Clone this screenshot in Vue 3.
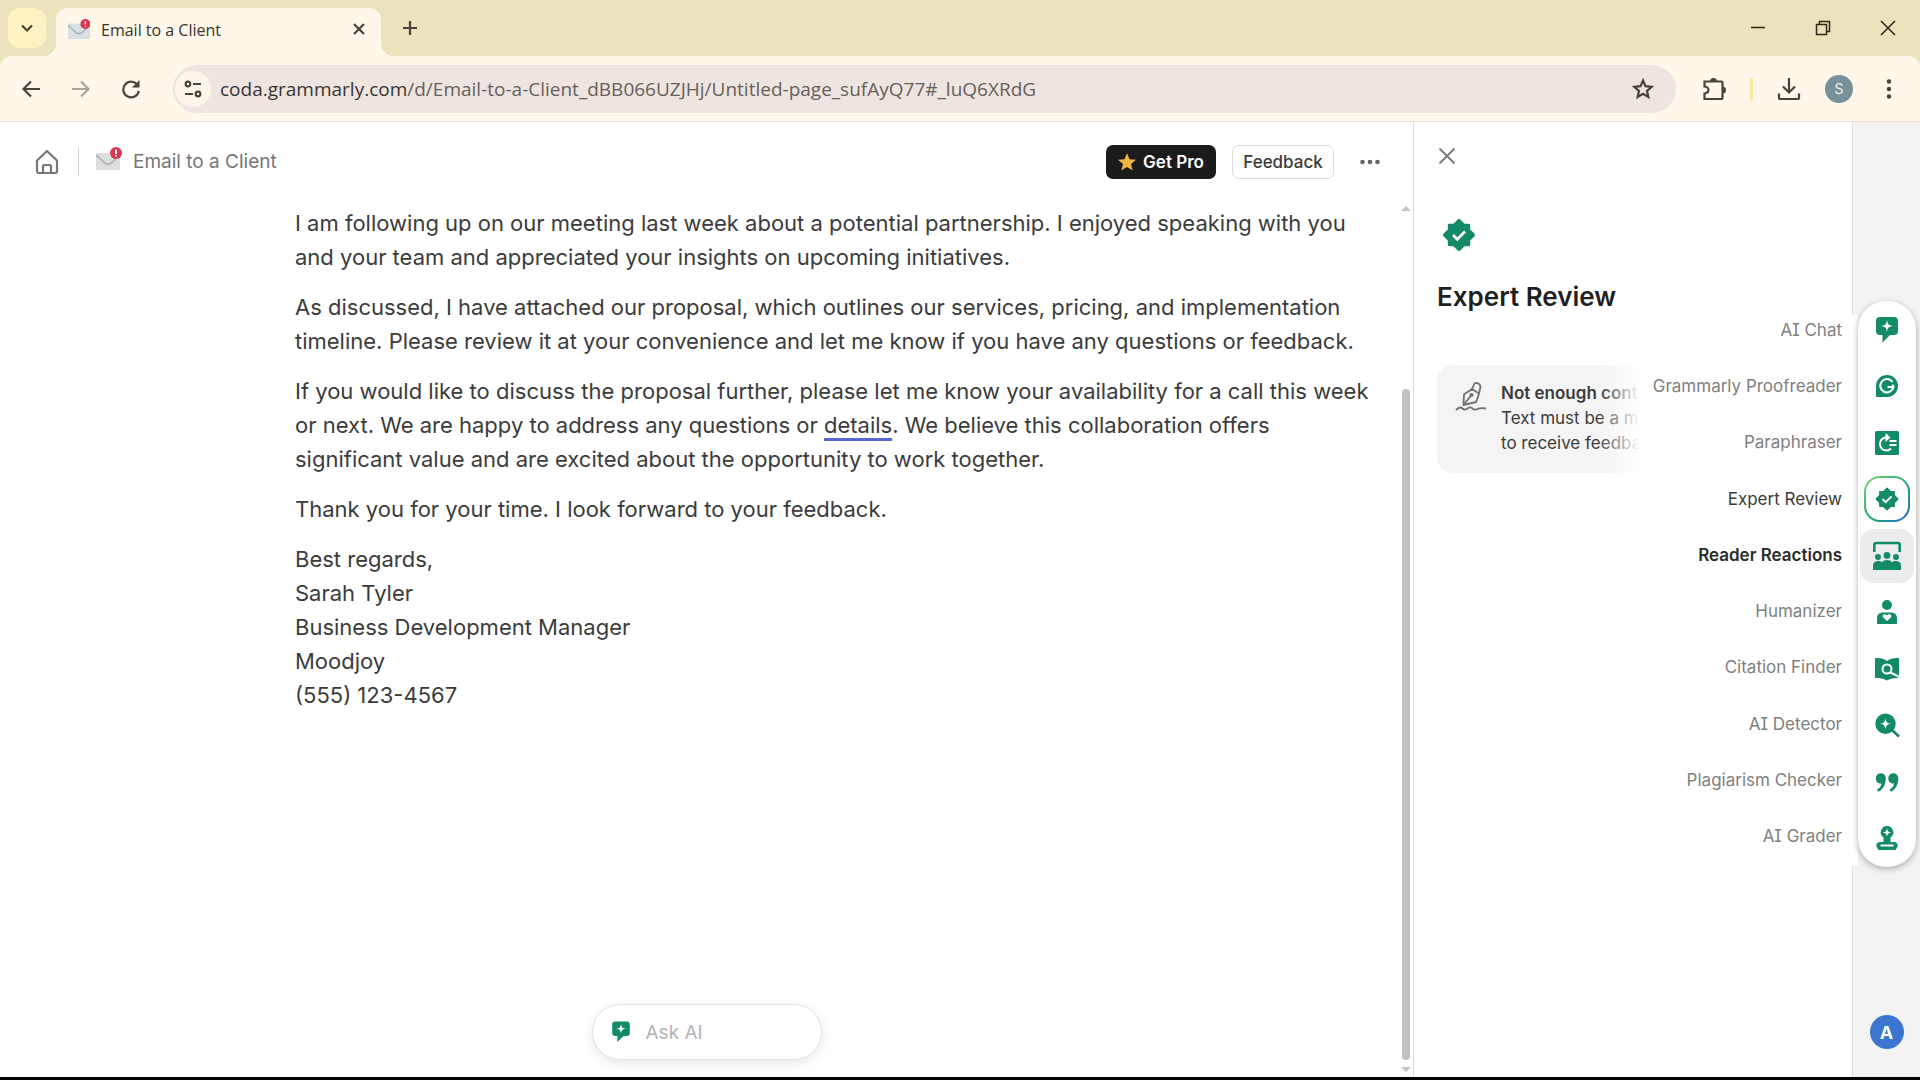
<template>
  <div class="window">
    <!-- Tab strip -->
    <header class="tab-strip">
      <button class="tab-search" aria-label="Search tabs">
        <svg width="14" height="14" viewBox="0 0 14 14"><path class="line" d="M2 4.5l5 5 5-5" /></svg>
      </button>
      <div class="tab">
        <svg class="mail" width="22" height="20" viewBox="0 0 24 22">
          <rect x="0" y="5" width="24" height="17" rx="1" fill="#d9dfe2" />
          <path d="M0 7l10 9h4l8-7" fill="none" stroke="#a3b2b8" stroke-width="1.5" />
          <circle cx="19" cy="5.5" r="5.5" fill="#d93850" />
          <path d="M19 2.5v3.5M19 7.5v1" stroke="#fff" stroke-width="1.5" />
        </svg>
        <span class="tab-title">Email to a Client</span>
        <button class="tab-close" aria-label="Close tab">
          <svg width="12" height="12" viewBox="0 0 12 12"><path class="line" d="M1 1l10 10M11 1L1 11" /></svg>
        </button>
      </div>
      <button class="new-tab" aria-label="New tab">
        <svg width="16" height="16" viewBox="0 0 16 16"><path class="line" d="M8 1v14M1 8h14" /></svg>
      </button>
      <div class="window-controls">
        <button aria-label="Minimize">
          <svg width="16" height="16" viewBox="0 0 16 16"><path class="thin" d="M1 7.5h14" /></svg>
        </button>
        <button aria-label="Restore">
          <svg width="16" height="16" viewBox="0 0 16 16"><path class="thin" d="M1.5 4.5h10v10h-10zM4.5 4V1.5h10v10H12" /></svg>
        </button>
        <button aria-label="Close">
          <svg width="16" height="16" viewBox="0 0 16 16"><path class="thin" d="M1 1l14 14M15 1L1 15" /></svg>
        </button>
      </div>
    </header>

    <!-- Toolbar -->
    <nav class="toolbar">
      <button class="tool-btn" aria-label="Back">
        <svg width="20" height="20" viewBox="0 0 20 20"><path class="line" d="M19 10H3M10 2.5L2.5 10l7.5 7.5" /></svg>
      </button>
      <button class="tool-btn disabled" aria-label="Forward" disabled>
        <svg width="20" height="20" viewBox="0 0 20 20"><path class="line" d="M1 10h16M10 2.5l7.5 7.5-7.5 7.5" /></svg>
      </button>
      <button class="tool-btn" aria-label="Reload">
        <svg width="20" height="20" viewBox="0 0 20 20">
          <path class="line" d="M16.5 6A7.8 7.8 0 1 0 17.8 12" />
          <path d="M18.5 1v7.5H11z" fill="#4a4238" />
        </svg>
      </button>
      <div class="address">
        <button class="site-info" aria-label="Site information">
          <svg width="18" height="18" viewBox="0 0 18 18">
            <circle class="line" cx="4" cy="4" r="2.3" />
            <circle class="line" cx="14" cy="14" r="2.3" />
            <path class="line" d="M9 4h8M1 14h8" />
          </svg>
        </button>
        <a class="url" href="#"><span class="host">coda.grammarly.com</span>/d/Email-to-a-Client_dBB066UZJHj/Untitled-page_sufAyQ77#_luQ6XRdG</a>
        <button class="bookmark" aria-label="Bookmark">
          <svg width="22" height="22" viewBox="0 0 22 22">
            <path class="line" d="M11 2.5l2.5 5.7 6.2.6-4.7 4.1 1.4 6.1-5.4-3.2-5.4 3.2L7 12.9 2.3 8.8l6.2-.6z" />
          </svg>
        </button>
      </div>
      <button class="tool-btn extensions" aria-label="Extensions">
        <svg width="24" height="24" viewBox="0 0 24 24">
          <path class="line" d="M2.5 4.5h17a1 1 0 0 1 1 1V21a1 1 0 0 1-1 1h-17v-5.5c3-.5 4-2 4-3.5s-1-3-4-3.5z" />
          <path d="M8 4.5a3.5 3.5 0 0 1 7 0zM20.5 9.5a3.5 3.5 0 0 1 0 7z" fill="#4a4238" />
        </svg>
      </button>
      <span class="toolbar-divider"></span>
      <button class="tool-btn" aria-label="Downloads">
        <svg width="24" height="24" viewBox="0 0 24 24"><path class="line" d="M12 1v14M6 9.5l6 6 6-6M2 16.5V21a1 1 0 0 0 1 1h18a1 1 0 0 0 1-1v-4.5" /></svg>
      </button>
      <button class="tool-btn" aria-label="Profile"><span class="profile">S</span></button>
      <button class="tool-btn" aria-label="Menu">
        <svg width="6" height="20" viewBox="0 0 6 20" fill="#4a4238">
          <circle cx="3" cy="2.5" r="2.2" />
          <circle cx="3" cy="10" r="2.2" />
          <circle cx="3" cy="17.5" r="2.2" />
        </svg>
      </button>
    </nav>

    <div class="app">
      <!-- Editor -->
      <main class="editor">
        <header class="doc-header">
          <button class="home" aria-label="Home">
            <svg width="24" height="26" viewBox="0 0 24 26" fill="none" stroke="#777" stroke-width="2.2" stroke-linejoin="round">
              <path d="M2 11.5L12 2l10 9.5V22a2 2 0 0 1-2 2H4a2 2 0 0 1-2-2z" />
              <path d="M8 24v-6.5a1.5 1.5 0 0 1 1.5-1.5h5a1.5 1.5 0 0 1 1.5 1.5V24" />
            </svg>
          </button>
          <span class="header-divider"></span>
          <svg class="mail" width="26" height="24" viewBox="0 0 26 24">
            <rect x="0" y="6" width="24" height="17" rx="1" fill="#dcdddd" />
            <path d="M0 8l10 9h4l8-7" fill="none" stroke="#aaadb0" stroke-width="1.5" />
            <circle cx="20" cy="6" r="6" fill="#d93850" />
            <path d="M20 2.5V7M20 8v1.5" stroke="#fff" stroke-width="1.8" />
          </svg>
          <span class="doc-title">Email to a Client</span>
          <button class="get-pro">
            <svg width="18" height="18" viewBox="0 0 18 18">
              <path d="M9 0l2.5 6.2 6.5.6-5 4.2 1.6 6.5L9 14l-5.6 3.5L5 11 0 6.8l6.5-.6z" fill="#f2b544" />
            </svg>
            Get Pro
          </button>
          <button class="feedback">Feedback</button>
          <button class="more" aria-label="More">
            <svg width="20" height="6" viewBox="0 0 20 6" fill="#666">
              <circle cx="2.5" cy="3" r="2.3" />
              <circle cx="10" cy="3" r="2.3" />
              <circle cx="17.5" cy="3" r="2.3" />
            </svg>
          </button>
        </header>

        <div class="doc-scroll">
          <article class="doc">
            <p>I am following up on our meeting last week about a potential partnership. I enjoyed speaking with you and your team and appreciated your insights on upcoming initiatives.</p>
            <p>As discussed, I have attached our proposal, which outlines our services, pricing, and implementation timeline. Please review it at your convenience and let me know if you have any questions or feedback.</p>
            <p>If you would like to discuss the proposal further, please let me know your availability for a call this week or next. We are happy to address any questions or <span class="suggestion">details</span>. We believe this collaboration offers significant value and are excited about the opportunity to work together.</p>
            <p>Thank you for your time. I look forward to your feedback.</p>
            <p>Best regards,<br />Sarah Tyler<br />Business Development Manager<br />Moodjoy<br />(555) 123-4567</p>
          </article>
          <div class="scrollbar">
            <span class="arrow up"></span>
            <span class="thumb"></span>
            <span class="arrow down"></span>
          </div>
        </div>

        <label class="ask">
          <svg width="24" height="24" viewBox="0 0 30 30">
            <path :d="tools[0].fill" fill="#138a68" />
            <path :d="tools[0].cut" fill="#fff" />
          </svg>
          <input v-model="question" type="text" placeholder="Ask AI" aria-label="Ask AI" />
        </label>
      </main>

      <!-- Agent panel -->
      <aside class="panel">
        <button class="panel-close" aria-label="Close panel">
          <svg width="18" height="18" viewBox="0 0 18 18"><path d="M1.5 1.5l15 15M16.5 1.5l-15 15" stroke="#777" stroke-width="1.8" /></svg>
        </button>
        <svg class="panel-badge" width="40" height="40" viewBox="0 0 30 30">
          <path :d="tools[3].fill" fill="#138a68" stroke="#138a68" stroke-linejoin="round" />
          <path :d="tools[3].cutLine" fill="none" stroke="#fff" stroke-width="2" />
        </svg>
        <h1>Expert Review</h1>
        <div class="notice">
          <svg width="32" height="32" viewBox="0 0 32 32" fill="none" stroke="#6f7076" stroke-width="1.8" stroke-linejoin="round">
            <path d="M8.5 24L9 13.5c2.5-2 5.5-3.5 8-5.5l7 4.5c-1 3.5-1.5 6-3 8.5z" />
            <path d="M17 8l2.5-5.5c2.5-1.5 6 .5 6 3.5L24 12.5M8.5 24l7.5-9.5" />
            <circle cx="16.5" cy="14" r="1.2" />
            <path d="M1 29c3-3 5-3 6.5-1.5s3 1.5 5 0 3.5-1.5 5 0 3 1.5 5 .5 5-1 8.5-.5" />
          </svg>
          <div class="notice-text">
            <strong>Not enough content</strong><br />Text must be a min<br />to receive feedback
          </div>
        </div>
      </aside>

      <!-- Right strip -->
      <div class="strip">
        <button class="account" aria-label="Account">A</button>
      </div>

      <div class="agents">
        <ul class="agent-labels">
          <li v-for="tool in tools" :key="tool.name" :class="tool.state">{{ tool.name }}</li>
        </ul>
        <div class="rail">
          <button
            v-for="tool in tools"
            :key="tool.name"
            class="rail-btn"
            :class="tool.state"
            :aria-label="tool.name"
          >
            <svg width="30" height="30" viewBox="0 0 30 30">
              <path :d="tool.fill" fill="#138a68" />
              <path v-if="tool.line" :d="tool.line" fill="none" stroke="#138a68" stroke-width="2.6" />
              <path v-if="tool.cut" :d="tool.cut" fill="#fff" />
              <path v-if="tool.cutLine" :d="tool.cutLine" fill="none" stroke="#fff" stroke-width="2" />
            </svg>
          </button>
        </div>
      </div>
    </div>
  </div>
</template>

<script setup>
import { ref } from 'vue'

const question = ref('')

// fill / line are drawn in green, cut / cutLine in white on top
const tools = [
  {
    name: 'AI Chat',
    fill: 'M8 2h14a4 4 0 0 1 4 4v10a4 4 0 0 1-4 4h-4l-7.5 7.5V20H8a4 4 0 0 1-4-4V6a4 4 0 0 1 4-4z',
    cut: 'M15 5c.8 4.5 1.5 5.2 6 6-4.5.8-5.2 1.5-6 6-.8-4.5-1.5-5.2-6-6 4.5-.8 5.2-1.5 6-6z',
  },
  {
    name: 'Grammarly Proofreader',
    fill: 'M15 4a11 11 0 1 1 0 22H5a1 1 0 0 1-1-1V15A11 11 0 0 1 15 4z',
    cutLine: 'M20.5 11A6.7 6.7 0 1 0 21.5 16H15.5M20.8 13.5v5',
  },
  {
    name: 'Paraphraser',
    fill: 'M4.5 3h21A1.5 1.5 0 0 1 27 4.5v21a1.5 1.5 0 0 1-1.5 1.5h-21A1.5 1.5 0 0 1 3 25.5v-21A1.5 1.5 0 0 1 4.5 3z',
    cut: 'M13.5 5l5 4.5-5 4.5z',
    cutLine: 'M14.5 9.5h-1a6.5 6.5 0 1 0 5.5 11M17.5 13H24.5M17.5 17H24.5',
  },
  {
    name: 'Expert Review',
    state: 'current',
    fill: 'M7.5 7.1h15l.4.4v15l-.4.4h-15l-.4-.4v-15zM15 3.5l.8.4L26.1 14.200l.4.8-.4.8L15.800 26.100l-.8.4-.8-.4L3.900 15.800l-.4-.8.4-.8L14.200 3.900z',
    cutLine: 'M10.5 15l3.2 3.2 5.8-5.8',
  },
  {
    name: 'Reader Reactions',
    state: 'hovered',
    fill: 'M15 11a3.4 3.4 0 1 1 0 6.8 3.4 3.4 0 0 1 0-6.8zM6 13a3 3 0 1 1 0 6 3 3 0 0 1 0-6zM24 13a3 3 0 1 1 0 6 3 3 0 0 1 0-6zM1 29v-4.5C1 21.5 3 20 6 20c1.8 0 3 .5 4 1.2 1.2-1.5 3-2.2 5-2.2s3.8.7 5 2.2c1-.7 2.2-1.2 4-1.2 3 0 5 1.5 5 4.5V29z',
    line: 'M2.3 11V4a2 2 0 0 1 2-2h21.4a2 2 0 0 1 2 2v7',
  },
  {
    name: 'Humanizer',
    fill: 'M15 3a5 5 0 1 1 0 10 5 5 0 0 1 0-10zM5 27v-5.5c0-4 2.5-6 6-6h8c3.5 0 6 2 6 6V27z',
    cut: 'M15 24l-4-3.8c-1.5-2.2 1.8-4.4 4-1.8 2.2-2.6 5.5-.4 4 1.8z',
  },
  {
    name: 'Citation Finder',
    fill: 'M3 4c5-.5 9 .5 12 3 3-2.5 7-3.5 12-3v20c-5-.3-9 .5-12 2.5-3-2-7-2.8-12-2.5z',
    cutLine: 'M15 10.5a4.5 4.5 0 1 1 0 9 4.5 4.5 0 0 1 0-9zM18.5 18.5l9 4.5',
  },
  {
    name: 'AI Detector',
    fill: 'M13.5 3.5a10.2 10.2 0 1 1 0 20.4 10.2 10.2 0 0 1 0-20.4z',
    line: 'M20 20l7 6.5',
    cut: 'M13.5 8.2c.8 4.2 1.3 4.7 5.5 5.5-4.2.8-4.7 1.3-5.5 5.5-.8-4.2-1.3-4.7-5.5-5.5 4.2-.8 4.7-1.3 5.5-5.5z',
  },
  {
    name: 'Plagiarism Checker',
    fill: 'M13.8 11c0 7-3 11.5-7.3 13.8l-1.6-2c2.6-1.6 4.2-3.6 4.5-6.4-3 .4-5.6-1.8-5.6-5a5 5 0 0 1 10-.4zM26.3 11c0 7-3 11.5-7.3 13.8l-1.6-2c2.6-1.6 4.2-3.6 4.5-6.4-3 .4-5.6-1.8-5.6-5a5 5 0 0 1 10-.4z',
  },
  {
    name: 'AI Grader',
    fill: 'M15 3a6.3 6.3 0 0 1 3.5 11.5V19H22a3.7 3.7 0 0 1 2.5 6.5l-1 1.5h-17l-1-1.5A3.7 3.7 0 0 1 8 19h3.5v-4.5A6.3 6.3 0 0 1 15 3z',
    cut: 'M15 5c.6 3.4 1 3.8 4.3 4.4-3.3.6-3.7 1-4.3 4.4-.6-3.4-1-3.8-4.3-4.4C14 8.8 14.4 8.4 15 5z',
    cutLine: 'M8.5 22.5h13',
  },
]
</script>

<style>
body {
  background: #ffffff;
}
</style>

<style scoped>
.window {
  display: flex;
  flex-direction: column;
  min-height: 100vh;
  box-sizing: border-box;
  border-bottom: 3px solid #000000;
  background: #ebe3bb;
  font-family: Inter, "Liberation Sans", sans-serif;
  color: #3b3b3b;
}

button {
  display: flex;
  align-items: center;
  justify-content: center;
  flex: none;
  padding: 0;
  border: none;
  background: none;
  font-family: inherit;
  color: inherit;
  cursor: pointer;
}

svg {
  display: block;
  flex: none;
}

.line {
  fill: none;
  stroke: #4a4238;
  stroke-width: 2.2;
}

.thin {
  fill: none;
  stroke: #2d2817;
  stroke-width: 1.5;
}

/* Tab strip */
.tab-strip {
  display: flex;
  align-items: center;
  height: 56px;
  padding-left: 8px;
}

.tab-search {
  width: 38px;
  height: 40px;
  border-radius: 12px;
  background: #fdf2c2;
}

.tab {
  position: relative;
  display: flex;
  align-items: center;
  align-self: flex-end;
  width: 325px;
  height: 48px;
  box-sizing: border-box;
  margin-left: 10px;
  padding: 0 12px;
  border-radius: 12px 12px 0 0;
  background: #fff7ea;
}

.tab::before,
.tab::after {
  content: "";
  position: absolute;
  bottom: 0;
  width: 12px;
  height: 12px;
}

.tab::before {
  left: -12px;
  background: radial-gradient(circle at 0 0, transparent 12px, #fff7ea 12px);
}

.tab::after {
  right: -12px;
  background: radial-gradient(circle at 100% 0, transparent 12px, #fff7ea 12px);
}

.tab-title {
  flex: 1;
  margin-left: 11px;
  padding-bottom: 4px;
  font-family: "Open Sans", "Noto Sans", sans-serif;
  font-size: 16px;
  line-height: 24px;
  color: #38332a;
}

.tab .mail,
.tab-close {
  margin-bottom: 6px;
}

.tab-close {
  width: 20px;
  height: 20px;
}

.new-tab {
  width: 32px;
  height: 32px;
  margin-left: 13px;
}

.window-controls {
  display: flex;
  margin-left: auto;
}

.window-controls button {
  width: 65px;
  height: 56px;
}

/* Toolbar */
.toolbar {
  display: flex;
  align-items: center;
  height: 65px;
  padding: 0 6px;
  border-bottom: 1px solid #e6dfda;
  border-radius: 12px 12px 0 0;
  background: #fff7ea;
}

.tool-btn {
  width: 50px;
  height: 48px;
}

.tool-btn.disabled {
  opacity: 0.45;
}

.address {
  display: flex;
  align-items: center;
  flex: 1;
  height: 48px;
  margin-left: 17px;
  border-radius: 24px;
  background: #eee5e1;
}

.site-info {
  width: 36px;
  height: 36px;
  margin-left: 2px;
  border-radius: 18px;
  background: #fdf4ec;
}

.url {
  flex: 1;
  margin-left: 9px;
  font-family: "Open Sans", "Noto Sans", sans-serif;
  font-size: 19px;
  line-height: 28px;
  color: #665f5b;
  text-decoration: none;
}

.host {
  color: #3a3431;
}

.bookmark {
  width: 36px;
  height: 36px;
  margin-right: 15px;
}

.extensions {
  margin-left: 13px;
}

.toolbar-divider {
  width: 3px;
  height: 22px;
  margin: 0 11px;
  background: #f9e7a0;
}

.profile {
  width: 28px;
  border-radius: 14px;
  background: #78909c;
  color: #e8f0f4;
  font-size: 14px;
  line-height: 28px;
}

/* App */
.app {
  position: relative;
  display: flex;
  flex: 1;
  background: #ffffff;
}

.editor {
  position: relative;
  display: flex;
  flex-direction: column;
  flex: 1;
}

.doc-header {
  display: flex;
  align-items: center;
  height: 80px;
  padding: 0 27px 0 35px;
}

.header-divider {
  width: 1px;
  height: 28px;
  margin: 0 17px 0 19px;
  background: #d2d2d2;
}

.doc-header .mail {
  margin-bottom: 6px;
}

.doc-title {
  flex: 1;
  margin-left: 11px;
  font-size: 19px;
  line-height: 28px;
  color: #757575;
}

.get-pro,
.feedback {
  height: 34px;
  border-radius: 7px;
  font-size: 17px;
}

.get-pro {
  width: 110px;
  gap: 7px;
  background: #1b1b1b;
  color: #ffffff;
  font-weight: 600;
}

.feedback {
  width: 102px;
  margin-left: 16px;
  border: 1px solid #dcdcdc;
  font-weight: 500;
}

.more {
  width: 32px;
  height: 32px;
  margin-left: 20px;
}

.doc-scroll {
  display: flex;
  flex: 1;
}

.doc {
  flex: 1;
  padding: 4px 23px 96px 295px;
}

.doc p {
  margin: 0 0 16px 0;
  font-size: 22px;
  line-height: 34px;
}

.suggestion {
  text-decoration: underline 3px #5468d4;
  text-decoration-skip-ink: none;
  text-underline-offset: 5px;
}

.scrollbar {
  display: flex;
  flex-direction: column;
  align-items: center;
  width: 14px;
  padding: 4px 0 5px 0;
}

.arrow {
  border: 5px solid transparent;
}

.arrow.up {
  border-top: none;
  border-bottom: 5px solid #c4c4c4;
}

.arrow.down {
  border-bottom: none;
  border-top: 5px solid #c4c4c4;
}

.thumb {
  flex: 1;
  width: 8px;
  margin: 178px 0 7px 0;
  border-radius: 4px;
  background: #c1c1c1;
}

.ask {
  position: absolute;
  left: 50%;
  bottom: 17px;
  display: flex;
  align-items: center;
  gap: 13px;
  width: 230px;
  height: 56px;
  box-sizing: border-box;
  padding: 0 16px;
  border: 1px solid #e2e2e2;
  border-radius: 28px;
  background: #ffffff;
  box-shadow: 0 3px 12px rgba(0, 0, 0, 0.1);
  transform: translateX(-50%);
}

.ask input {
  flex: 1;
  min-width: 0;
  padding: 0;
  border: none;
  outline: none;
  background: none;
  font-family: inherit;
  font-size: 19px;
}

.ask input::placeholder {
  color: #b4b4b8;
}

/* Panel */
.panel {
  width: 439px;
  box-sizing: border-box;
  padding: 24px 0 0 23px;
  border-left: 1px solid #dcdcdc;
}

.panel-close {
  width: 20px;
  height: 20px;
}

.panel-badge {
  margin: 49px 0 0 2px;
}

.panel h1 {
  margin: 24px 0 0 0;
  font-size: 26px;
  font-weight: 600;
  line-height: 36px;
  color: #1f1f1f;
}

.notice {
  display: flex;
  gap: 14px;
  height: 108px;
  box-sizing: border-box;
  margin-top: 50px;
  padding: 16px 18px;
  border-radius: 16px;
  background: #f4f4f4;
}

.notice-text {
  font-size: 17px;
  line-height: 25px;
  white-space: nowrap;
}

.notice-text strong {
  font-weight: 600;
}

.strip {
  display: flex;
  align-items: flex-end;
  justify-content: center;
  width: 68px;
  box-sizing: border-box;
  padding-bottom: 28px;
  border-left: 1px solid #dddddd;
  background: #f3f3f3;
}

.account {
  width: 34px;
  height: 34px;
  border-radius: 17px;
  background: #3a76cf;
  color: #ffffff;
  font-size: 18px;
  font-weight: 700;
}

/* Agent list floating over the panel */
.agents {
  position: absolute;
  top: 179px;
  right: 4px;
  display: flex;
}

.agent-labels {
  display: flex;
  flex-direction: column;
  justify-content: space-between;
  width: 244px;
  height: 536px;
  margin: 14px 0 0 0;
  padding: 0 16px 15px 0;
  list-style: none;
  text-align: right;
  background: linear-gradient(90deg, rgba(255, 255, 255, 0), #ffffff 42px);
}

.agent-labels li {
  font-size: 17px;
  line-height: 30px;
  font-feature-settings: "cv08";
  color: #808080;
}

.agent-labels li.current {
  color: #3b3b3b;
}

.agent-labels li.hovered {
  color: #2b2b2b;
  font-weight: 600;
}

.rail {
  display: flex;
  flex-direction: column;
  align-items: center;
  justify-content: space-between;
  width: 58px;
  height: 566px;
  box-sizing: border-box;
  padding: 2px 0;
  border-radius: 28px;
  background: #ffffff;
  box-shadow: 0 2px 6px rgba(0, 0, 0, 0.3);
}

.rail-btn {
  width: 54px;
  height: 54px;
  border-radius: 14px;
}

.rail-btn.current {
  width: 46px;
  height: 46px;
  margin: 4px 0;
  border: 2px solid transparent;
  border-radius: 16px;
  background:
    linear-gradient(#ffffff, #ffffff) padding-box,
    linear-gradient(135deg, #7fd86f, #17a07c 60%, #3566d6) border-box;
}

.rail-btn.hovered {
  background: #ececee;
}
</style>
